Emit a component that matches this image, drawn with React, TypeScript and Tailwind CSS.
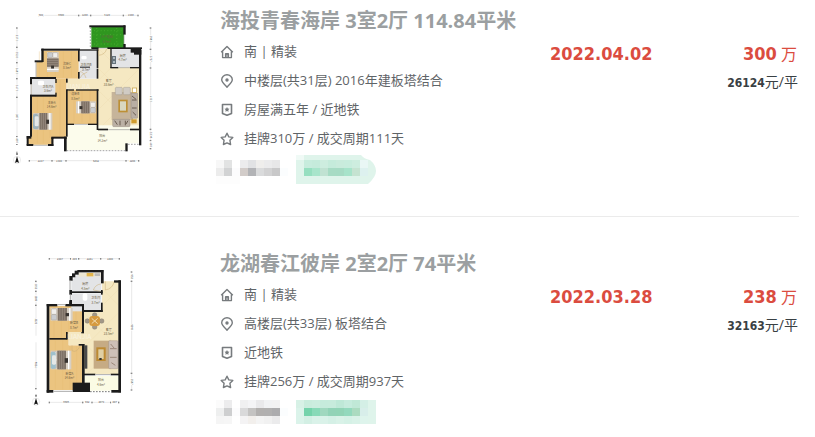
import { ReactNode } from 'react';

type Rect = [number, number, number, number];

interface Label {
  x: number;
  y: number;
  name: string;
  area: string;
}

interface Listing {
  title: string;
  rows: string[];
  date: string;
  total: string;
  unit: string;
  plan: ReactNode;
  mosaic: ReactNode;
}

const WALL = '#1b1b1b';
const WOOD = '#ebc480';
const TILE = '#f5e8c2';
const BATH = '#e3e4e6';

function Walls({ rects }: { rects: Rect[] }) {
  return (
    <g fill={WALL}>
      {rects.map(([x, y, w, h], i) => (
        <rect key={i} x={x} y={y} width={w} height={h} />
      ))}
    </g>
  );
}

function Labels({ items }: { items: Label[] }) {
  return (
    <g fill="#6b5d45" fontSize="9" textAnchor="middle">
      {items.map((l) => (
        <g key={l.name + l.area}>
          <text x={l.x} y={l.y}>{l.name}</text>
          <text x={l.x} y={l.y + 13}>{l.area}</text>
        </g>
      ))}
    </g>
  );
}

// 尺寸标注
function HDim({ y, stops, values }: { y: number; stops: number[]; values: string[] }) {
  return (
    <g>
      <path d={`M${stops[0]} ${y}H${stops[stops.length - 1]}`} stroke="#d2d2d2" strokeWidth="1.5" />
      {stops.map((x) => (
        <rect key={x} x={x - 2} y={y - 2} width="4" height="5" fill="#888" />
      ))}
      {values.map((v, i) => {
        const cx = (stops[i] + stops[i + 1]) / 2;
        return (
          <g key={i}>
            <rect x={cx - 10} y={y - 4} width="20" height="8" fill="#fff" />
            <text x={cx} y={y + 3} fontSize="8" textAnchor="middle" fill="#444">{v}</text>
          </g>
        );
      })}
    </g>
  );
}

function VDim({ x, stops, values }: { x: number; stops: number[]; values: string[] }) {
  return (
    <g transform={`translate(${x} 0) rotate(90)`}>
      <HDim y={0} stops={stops} values={values} />
    </g>
  );
}

function Bed({ x, y, w, h, flip, rotate }: { x: number; y: number; w: number; h: number; flip?: boolean; rotate?: boolean }) {
  const t = rotate
    ? `translate(${x + h} ${y}) rotate(90)`
    : flip
      ? `translate(${x + w} ${y}) scale(-1 1)`
      : `translate(${x} ${y})`;
  return (
    <g transform={t}>
      <rect width={w} height={h} fill="#d8d0c4" />
      <rect x="2" y="3" width={w * 0.24} height={h * 0.42} rx="3" fill="#f1efec" stroke="#9a9187" />
      <rect x="2" y={h * 0.52} width={w * 0.24} height={h * 0.42} rx="3" fill="#c9ccd0" stroke="#9a9187" />
      <rect x={w * 0.32} width={w * 0.42} height={h} fill="#7d7065" />
      <path d={`M${w * 0.42} 0V${h}M${w * 0.53} 0V${h}M${w * 0.64} 0V${h}`} stroke="#a0948a" strokeWidth="2" />
      <rect x={w * 0.68} y={h * 0.4} width={w * 0.16} height={h * 0.25} fill="#38332f" />
      <path d={`M${w * 0.87} 0V${h}`} stroke="#fff" strokeWidth="4" />
    </g>
  );
}

function Compass({ x, y }: { x: number; y: number }) {
  return (
    <g transform={`translate(${x} ${y})`}>
      <circle r="11" fill="none" stroke="#c7c7c7" />
      <path d="M0 -11L6 9L0 6L-6 9Z" fill="#151515" />
      <rect x="-2" y="-21" width="4" height="6" fill="#555" />
    </g>
  );
}

function PlanA() {
  return (
    <svg viewBox="0 21 510 495" className="w-full" fontFamily="'Noto Sans CJK SC', sans-serif" role="img" aria-label="户型图">
      <HDim y={46} stops={[116, 130, 236, 272, 370, 414]} values={['604', '3600', '1200', '3120', '1400']} />
      <HDim y={482} stops={[88, 156, 198, 378, 416]} values={['2247', '1380', '5842', '1200']} />
      <VDim x={51} stops={[84, 142, 188, 236, 292, 410, 434, 456]} values={['2170', '1530', '1680', '1670', '3870', '897', '']} />
      <VDim x={452} stops={[84, 148, 204, 388, 422, 446]} values={['1980', '1727', '6010', '1204', '680']} />

      {/* 房间地面 */}
      <path d="M126 152H236V236H109V184H126Z" fill={WOOD} />
      <path d="M94 236H200V412H160V434H84V410H94Z" fill={WOOD} />
      <rect x="200" y="268" width="94" height="104" fill={WOOD} />
      <path d="M294 146H334V202H418V390H294V270H200V236H294Z" fill={TILE} />
      <path d="M300 210L414 324M414 210L300 324M294 270L414 388M334 202L294 242M414 270L300 384M300 150L330 180" stroke="#ecdcae" strokeWidth="1" />
      <path d="M118 154V232M142 154V232M166 154V232M190 154V232M214 154V232M112 290V430M130 290V430M150 290V414M180 240V410M222 272V368M246 272V368M270 272V368" stroke="#e3b86c" strokeWidth="1" />
      <rect x="238" y="150" width="56" height="86" fill={BATH} />
      <rect x="94" y="236" width="72" height="52" fill={BATH} />
      <rect x="334" y="146" width="84" height="56" fill={BATH} />
      <path d="M200 376H416V430H380V450H200Z" fill="#fcfcec" />
      <rect x="274" y="80" width="98" height="64" fill="#2f961f" />
      <path d="M282 92H366M280 104H364M282 132H366M290 84V140M350 84V140" stroke="#3fa529" strokeWidth="4" strokeDasharray="3 7" />

      {/* 家具 */}
      <Bed x={141} y={156} w={60} h={35} rotate />
      <Bed x={100} y={339} w={57} h={50} />
      <Bed x={228} y={304} w={60} h={36} flip />
      <rect x="99" y="342" width="16" height="45" rx="5" fill="#9fb4bd" />
      <rect x="104" y="349" width="12" height="30" rx="4" fill="#e5e8e7" />
      <rect x="335" y="276" width="64" height="84" fill="#c6b49a" />
      <rect x="355" y="299" width="28" height="38" fill="#bd8f35" />
      <rect x="360" y="304" width="18" height="28" fill="#d9d7bf" />
      <rect x="346" y="262" width="21" height="22" rx="3" fill="#d0cbc4" stroke="#92887d" />
      <rect x="370" y="262" width="21" height="22" rx="3" fill="#d0cbc4" stroke="#92887d" />
      <rect x="393" y="279" width="20" height="76" rx="3" fill="#b9aea3" stroke="#83776b" />
      <path d="M396 288l12 10M396 300h14M396 324h14M398 336l10 10" stroke="#6b5d51" strokeWidth="3" />
      <rect x="338" y="358" width="52" height="22" rx="3" fill="#bbb0a5" stroke="#83776b" />
      <path d="M344 362l8 12M360 362v14M376 362v14M384 362l-6 10" stroke="#6b5d51" strokeWidth="3" />
      <rect x="397" y="264" width="13" height="13" fill="#fff" stroke="#c49b3c" strokeWidth="2" />
      <rect x="394" y="358" width="16" height="12" fill="#d09c2e" />
      <rect x="336" y="168" width="12" height="24" fill="#66737b" />
      <circle cx="342" cy="174" r="3" fill="#c3ccd2" />
      <circle cx="342" cy="186" r="3" fill="#c3ccd2" />
      <rect x="244" y="168" width="16" height="10" rx="4" fill="#fff" />
      <rect x="114" y="242" width="18" height="14" rx="4" fill="#fff" />

      <Walls
        rects={[
          [124, 146, 116, 6], [124, 146, 7, 40], [104, 181, 24, 6], [90, 231, 78, 6], [90, 231, 6, 22],
          [90, 284, 78, 6], [90, 284, 6, 126], [80, 408, 14, 8], [80, 408, 6, 28], [80, 432, 20, 6],
          [144, 432, 18, 6], [154, 412, 7, 26], [154, 410, 46, 7], [192, 410, 8, 44], [166, 237, 4, 12],
          [166, 278, 4, 12], [198, 236, 5, 12], [198, 268, 5, 142], [200, 268, 22, 4], [228, 268, 68, 4],
          [290, 268, 5, 122], [200, 371, 22, 4], [264, 371, 30, 4], [294, 386, 30, 5], [390, 386, 32, 5],
          [234, 148, 5, 36], [234, 216, 5, 20], [240, 148, 56, 4], [290, 148, 5, 56], [240, 200, 30, 3],
          [290, 206, 5, 30], [268, 76, 108, 6], [370, 76, 7, 28], [370, 132, 7, 14], [274, 142, 22, 5],
          [322, 142, 104, 5], [331, 144, 4, 60], [331, 201, 24, 4], [390, 201, 32, 4], [417, 144, 7, 292],
          [392, 144, 30, 14], [402, 150, 22, 14], [376, 430, 7, 24],
        ]}
      />
      <path d="M161 416H192V454H161Z" fill="#fff" />
      <path d="M271 82V144M200 452H376M384 433H418" fill="none" stroke="#777" strokeWidth="2" strokeDasharray="5 4" />
      <path d="M108 187V232M93 254V284M100 436H144M222 373H264M324 389H390M372 104V132M296 144H322M355 203H390" fill="none" stroke="#999" strokeWidth="2" />
      <path d="M296 146V166Q316 164 320 146M238 214Q252 216 258 234M240 234Q244 222 262 216M204 272L222 288" fill="none" stroke="#c9ad74" strokeWidth="1.5" />
      <Compass x={51} y={480} />
      <text x="234" y="266" fontSize="20" textAnchor="middle" fill="#fff" opacity="0.5">LIANJIA</text>
      <Labels
        items={[
          { x: 320, y: 115, name: '入户花园', area: '8.4m²' },
          { x: 368, y: 171, name: '厨房', area: '4.7m²' },
          { x: 201, y: 194, name: '次卧C', area: '8.5m²' },
          { x: 258, y: 199, name: '卫生间B', area: '3.7m²' },
          { x: 144, y: 263, name: '卫生间A', area: '3.6m²' },
          { x: 326, y: 246, name: '客厅', area: '33.6m²' },
          { x: 226, y: 286, name: '次卧B', area: '8.5m²' },
          { x: 155, y: 311, name: '主卧A', area: '14.6m²' },
          { x: 307, y: 412, name: '阳台', area: '14.2m²' },
        ]}
      />
    </svg>
  );
}

function PlanB() {
  return (
    <svg viewBox="0 30 510 495" className="w-full" fontFamily="'Noto Sans CJK SC', sans-serif" role="img" aria-label="户型图">
      <HDim y={56} stops={[148, 212, 236, 302, 358]} values={['2407', '889', '2281', '1880']} />
      <HDim y={487} stops={[148, 248, 276, 332, 356]} values={['3606', '942', '2074', '887']} />
      <VDim x={108} stops={[124, 154, 196, 292, 302, 446]} values={['1052', '1589', '3222', '', '4826']} />
      <VDim x={395} stops={[96, 124, 400, 450]} values={['952', '9240', '1587']} />

      <path d="M148 198H248V276H206V316H246V450H148Z" fill={WOOD} />
      <path d="M162 200V294M184 200V294M206 200V274M228 200V274M166 302V448M188 302V448M210 318V448M230 318V448" stroke="#e3b86c" strokeWidth="1" />
      <path d="M306 124H356V402H252V316H206V276H252V216H306Z" fill={TILE} />
      <path d="M310 150L354 194M354 150L310 194M254 220L354 320M354 220L254 320M262 400L354 308M254 310L344 400" stroke="#ecdcae" />
      <path d="M236 97H304V156H214V122L232 104Z" fill={BATH} />
      <rect x="214" y="160" width="90" height="54" fill={BATH} />
      <rect x="254" y="408" width="102" height="44" fill="#fbfbe4" />

      <Bed x={152} y={204} w={66} h={38} />
      <Bed x={152} y={332} w={62} h={56} />
      <rect x="152" y="336" width="15" height="50" rx="4" fill="#9fc0cc" />
      <rect x="156" y="346" width="12" height="28" rx="4" fill="#e5e8e7" />
      <rect x="236" y="98" width="66" height="12" fill="#ece6d3" />
      <rect x="260" y="99" width="20" height="10" fill="#e2b44b" />
      <rect x="284" y="100" width="16" height="8" fill="#b9b9b9" />
      <rect x="248" y="160" width="14" height="22" rx="5" fill="#fff" />
      <g fill="#a29787" stroke="#6f665b">
        <circle cx="284" cy="225" r="7" />
        <circle cx="284" cy="261" r="7" />
        <circle cx="262" cy="243" r="7" />
        <circle cx="305" cy="243" r="7" />
      </g>
      <rect x="268" y="228" width="32" height="30" rx="9" fill="#d69a3f" />
      <path d="M275 235l18 16M293 235l-18 16" stroke="#f2ddb1" strokeWidth="3" />
      <rect x="281" y="302" width="52" height="84" fill="#c6ab84" />
      <rect x="289" y="322" width="28" height="41" fill="#bd8a32" />
      <rect x="295" y="328" width="16" height="29" fill="#e0cfa4" />
      <rect x="326" y="302" width="28" height="84" rx="3" fill="#cdc0b7" stroke="#8e8075" />
      <path d="M332 312l10 12M330 326h20M330 352h20M334 368l12 8" stroke="#9b8779" strokeWidth="3" />
      <rect x="254" y="316" width="8" height="70" fill="#4a4a4a" />
      <rect x="298" y="354" width="7" height="6" fill="#333" />

      <Walls
        rects={[
          [232, 90, 78, 7], [224, 92, 12, 12], [216, 100, 10, 12], [208, 108, 10, 14], [303, 90, 8, 40],
          [208, 150, 8, 14], [208, 180, 8, 14], [216, 154, 92, 5], [303, 150, 5, 14], [303, 188, 5, 28],
          [250, 210, 58, 6], [208, 184, 8, 14], [140, 192, 32, 7], [196, 192, 54, 7], [140, 192, 8, 266],
          [246, 192, 6, 84], [148, 294, 54, 5], [198, 276, 5, 22], [236, 312, 16, 5], [246, 312, 8, 140],
          [244, 276, 8, 4], [342, 121, 20, 7], [355, 121, 8, 336], [246, 401, 40, 5], [332, 401, 26, 5],
          [140, 450, 20, 8], [218, 428, 52, 28], [334, 450, 29, 8],
        ]}
      />
      <path d="M210 122V150M211 164V180M172 194H196M160 454H218M286 404H332" fill="none" stroke="#aaa" strokeWidth="3" />
      <path d="M270 455H334" stroke="#777" strokeWidth="3" strokeDasharray="5 4" />
      <path d="M316 124V150Q338 146 342 126M280 150Q286 134 302 132M280 150L302 154M216 316V332Q230 340 240 318" fill="none" stroke="#c9ad74" strokeWidth="1.5" />
      <Compass x={108} y={485} />
      <text x="238" y="298" fontSize="20" textAnchor="middle" fill="#fff" opacity="0.5">LIANJIA</text>
      <Labels
        items={[
          { x: 256, y: 136, name: '厨房', area: '4.5m²' },
          { x: 287, y: 178, name: '卫生间', area: '3.7m²' },
          { x: 222, y: 253, name: '卧室B', area: '8.7m²' },
          { x: 326, y: 273, name: '客厅', area: '23.5m²' },
          { x: 208, y: 404, name: '卧室A', area: '14.6m²' },
          { x: 303, y: 424, name: '阳台', area: '4.6m²' },
        ]}
      />
    </svg>
  );
}

function Mosaic({ rows, top, mask }: { rows: string[][]; top: number; mask?: string }) {
  return (
    <svg viewBox="0 0 160 29" className="h-[29px] w-[160px]" aria-hidden="true" shapeRendering="crispEdges">
      {mask && (
        <clipPath id={mask}>
          <path d="M0 0H145Q148 4 154 5Q160 10 160 16Q160 22 152 29H0Z" />
        </clipPath>
      )}
      <g clipPath={mask ? `url(#${mask})` : undefined}>
        {rows.map((row, r) =>
          row.map((fill, c) => (
            <rect key={`${r}-${c}`} x={c * 8} y={top + r * 8} width="8" height="8" fill={fill} />
          ))
        )}
      </g>
    </svg>
  );
}

const W = '#ffffff';
const G = '#dff4eb';

const mosaicA = [
  [W, W, W, W, W, W, W, W, W, W, '#f0faf6', G, G, G, G, G, G, G, G, G],
  ['#f7f7f7', '#e2e3e3', W, '#ececed', '#e1e2e4', '#efeeec', '#ebebec', '#e7e7e8', W, W, G, '#c7ecdd', '#c5ebdb', '#cdeddf', '#c5ebdb', '#c9ebdc', '#c8ecdd', '#cdeddf', '#e9f7f5', G],
  ['#ececec', '#d2d3d4', '#fcfcfd', '#d2ccc9', '#b2b3b6', '#dadbdc', '#d2d2d3', '#c8c8c9', '#fbfdfe', W, G, '#96dfc0', '#a8e5cb', '#c0e2d2', '#a7dbc4', '#a6dbc4', '#a7e3ca', '#c5e3d1', '#ddf1ef', G],
  ['#fdfdfd', '#fdfdfd', '#fdfdfd', W, W, W, W, W, W, W, G, G, G, G, G, G, G, G, G, G],
];

const mosaicB = [
  ['#fbfbfb', '#ececed', W, '#f0f0f1', '#f4f4f6', '#e9e9eb', '#f1f2f4', '#f2f2f3', W, W, '#d7f1e6', '#c9ecdd', '#cbeddf', '#c6ebdc', '#c7ebdc', '#bee8d7', '#c6ebdd', '#c0e8d7', '#d4efe6', G],
  ['#eeefef', '#cecfd0', '#fcfcfd', '#d9d9da', '#c4c3c2', '#b2b0af', '#b1b0b0', '#acacae', '#fbfdfe', W, '#dbf3ea', '#74d3ab', '#88dab8', '#a0d8bf', '#92d3b7', '#91d4b6', '#93d9bd', '#abdbc0', '#d8eeea', G],
  ['#f5f5f5', '#f6f6f6', W, '#f4f3f4', '#f2efec', '#f4f4f4', '#f1f1f1', '#ebebec', W, W, '#dbf3ea', '#d3efe4', '#daf2e9', '#daf2e9', '#d5f0e6', '#d9f2e8', '#d5f1e6', '#d9f2e8', '#def4ec', G],
];

function HomeIcon() {
  return (
    <>
      <path d="M1.2 7.2L7 1.4L12.8 7.2M2.6 6.5V12.6H11.4V6.5" />
      <path d="M5.8 12.5V8.8H8.2V12.5" strokeWidth="1.8" />
    </>
  );
}

function PinIcon() {
  return (
    <>
      <path d="M7 13.2C4 10 1.7 8 1.7 5.7A5.3 5 0 0 1 12.3 5.7C12.3 8 10 10 7 13.2Z" />
      <circle cx="7" cy="6" r="1" fill="currentColor" />
    </>
  );
}

function BadgeIcon() {
  return (
    <>
      <path d="M2.5 1.5H11.5V10.5L7 12.3L2.5 10.5Z" strokeWidth="1.6" />
      <path d="M7 4L7.8 5.5L9.5 5.8L8.3 7L8.6 8.7L7 7.9L5.4 8.7L5.7 7L4.5 5.8L6.2 5.5Z" fill="currentColor" stroke="none" />
    </>
  );
}

function StarIcon() {
  return <path d="M7 1.2L8.8 4.9L12.8 5.4L9.9 8.2L10.6 12.5L7 10.9L3.4 12.5L4.1 8.2L1.2 5.4L5.2 4.9Z" />;
}

const rowIcons = [HomeIcon, PinIcon, BadgeIcon, StarIcon];

const listings: Listing[] = [
  {
    title: '海投青春海岸 3室2厅 114.84平米',
    rows: ['南 | 精装', '中楼层(共31层) 2016年建板塔结合', '房屋满五年 / 近地铁', '挂牌310万 / 成交周期111天'],
    date: '2022.04.02',
    total: '300',
    unit: '26124',
    plan: <PlanA />,
    mosaic: <Mosaic rows={mosaicA} top={-3} mask="tag-edge" />,
  },
  {
    title: '龙湖春江彼岸 2室2厅 74平米',
    rows: ['南 | 精装', '高楼层(共33层) 板塔结合', '近地铁', '挂牌256万 / 成交周期937天'],
    date: '2022.03.28',
    total: '238',
    unit: '32163',
    plan: <PlanB />,
    mosaic: <Mosaic rows={mosaicB} top={2} />,
  },
];

function ListingItem({ item }: { item: Listing }) {
  return (
    <li className="flex items-start border-b border-[#ebebeb] pt-[33px] pb-8 first:pt-[7px] last:border-b-0 last:pb-0">
      <a href="#" className="-mb-4 w-[170px] shrink-0">
        {item.plan}
      </a>

      <div className="ml-[50px] min-w-0 flex-1">
        <h3 className="text-[20px] leading-[28px] font-bold whitespace-nowrap text-[#9b9fa1]">
          <a href="#">{item.title}</a>
        </h3>
        <ul className="mt-0.5">
          {item.rows.map((text, i) => {
            const Icon = rowIcons[i];
            return (
              <li key={text} className="flex h-[29px] items-center gap-2.5 text-[13px] whitespace-nowrap text-[#5f6467]">
                <svg viewBox="0 0 14 14" className="size-3.5 shrink-0 text-[#777b7e]" fill="none" stroke="currentColor" strokeWidth="1.4" strokeLinejoin="round" aria-hidden="true">
                  <Icon />
                </svg>
                <span>{text}</span>
              </li>
            );
          })}
        </ul>
        <div className="mt-0.5 -ml-1">{item.mosaic}</div>
      </div>

      <div className="w-[120px] shrink-0 pt-[33px] font-['DejaVu_Sans_Condensed','Noto_Sans_CJK_SC',sans-serif] text-[18px] leading-[28px] font-bold text-[#db4c3f]">
        {item.date}
      </div>

      <div className="w-[129px] shrink-0 pt-[33px] text-right">
        <p className="h-7 pr-0.5 text-[16px] leading-[28px] text-[#db4c3f]">
          <strong className="font-['DejaVu_Sans_Condensed',sans-serif] text-[18px] font-bold">{item.total}</strong> 万
        </p>
        <p className="h-7 pr-px text-[14px] leading-[28px] text-[#394043]">
          <strong className="font-['DejaVu_Sans_Condensed',sans-serif] text-[12px] font-bold">{item.unit}</strong>元/平
        </p>
      </div>
    </li>
  );
}

export default function App() {
  return (
    <main className="min-h-screen bg-white pr-4 font-['Open_Sans','Noto_Sans_CJK_SC',sans-serif]">
      <ul>
        {listings.map((item) => (
          <ListingItem key={item.title} item={item} />
        ))}
      </ul>
    </main>
  );
}
